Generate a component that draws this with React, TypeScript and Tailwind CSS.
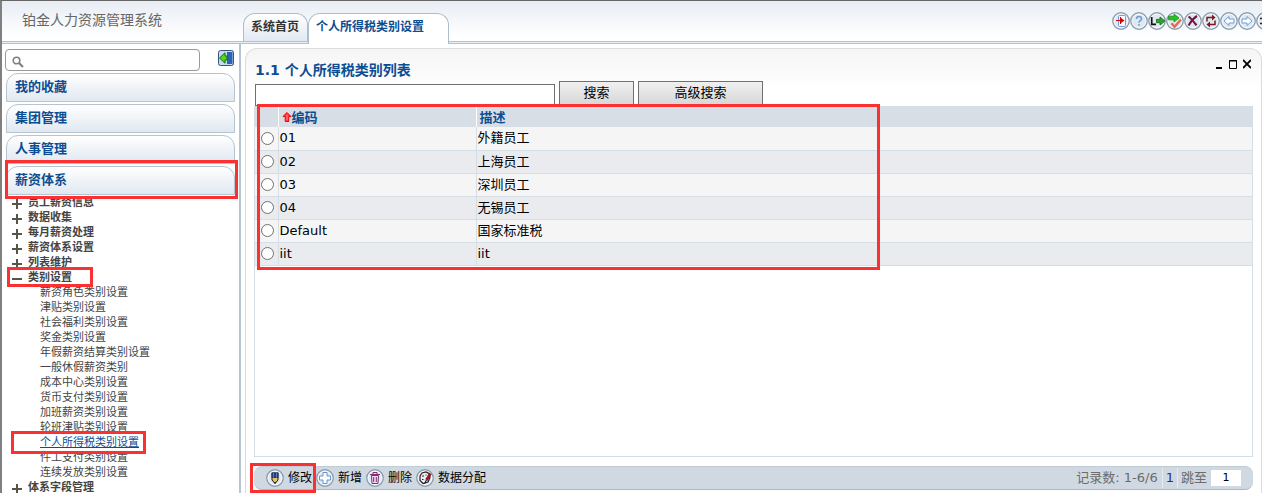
import type { ReactNode } from "react";

function Highlight({ className }: { className: string }) {
  return <span aria-hidden="true" className={`pointer-events-none absolute z-10 border-3 border-[#fb3030] ${className}`} />;
}

function RoundIcon({ children }: { children: ReactNode }) {
  return (
    <svg viewBox="0 0 18 18" className="size-[18px] shrink-0" aria-hidden="true">
      <circle cx="9" cy="9" r="8.2" fill="#dfe8f1" stroke="#8c9dab" strokeWidth="1.4" />
      <circle cx="9" cy="9" r="6.900" fill="none" stroke="#f6faff" strokeWidth="1" />
      {children}
    </svg>
  );
}

const toolbar: { label: string; icon: ReactNode }[] = [
  {
    label: "退出",
    icon: (
      <>
        <rect x="6.5" y="3.5" width="7" height="11" rx="1" fill="#f4f9ff" stroke="#6e9fd8" />
        <path d="M4 8.5h8M8.5 5v7" stroke="#d80000" strokeWidth="1.1" />
        <path d="M9 6l3.500 2.5L9 11z" fill="#d80000" />
      </>
    ),
  },
  {
    label: "帮助",
    icon: <path d="M6.5 7c0-3.300 5-3.300 5 0 0 1.8-2.5 1.6-2.5 3.7M9 12v1.8" fill="none" stroke="#6d9bd0" strokeWidth="1.5" />,
  },
  {
    label: "登录",
    icon: (
      <>
        <path d="M3.7 5v7.3H8" fill="none" stroke="#111" strokeWidth="1.7" />
        <path d="M8.5 7.3H12V5l5 4-5 4v-2.3H8.5z" fill="#2fa52f" stroke="#14671e" strokeWidth=".8" />
      </>
    ),
  },
  {
    label: "确认",
    icon: (
      <>
        <path d="M5.500 11.2l3 3.7L15 7.500" fill="none" stroke="#ef6848" strokeWidth="2.4" />
        <path d="M2.500 4.2h5.500V2l5 4-5 4V7.8H2.500z" fill="#22c51d" stroke="#128213" strokeWidth=".7" />
      </>
    ),
  },
  {
    label: "关闭",
    icon: <path d="M4.5 4.5c3 2 5 5 8 8.8M13 4c-3.500 2-6 5.500-8.500 9.500" fill="none" stroke="#721440" strokeWidth="2.1" />,
  },
  {
    label: "刷新",
    icon: (
      <>
        <path d="M5 9.500v-4h6M13 8.500v4H7" fill="none" stroke="#7d1820" strokeWidth="1.500" />
        <path d="M10 2.500l3.500 3L10 8.500zM8 9.500l-3.500 3 3.500 3z" fill="#7d1820" />
      </>
    ),
  },
  {
    label: "后退",
    icon: <path d="M4 9l5-4.500V7h5v4H9v2.500z" fill="#fff" stroke="#6e9fd8" />,
  },
  {
    label: "前进",
    icon: <path d="M14 9L9 4.500V7H4v4h5v2.500z" fill="#fff" stroke="#6e9fd8" />,
  },
  {
    label: "更多",
    icon: <path d="M4 6.500h9M4 11.500h9" stroke="#222" strokeWidth="1.500" />,
  },
];

const sections = ["我的收藏", "集团管理", "人事管理", "薪资体系"];

const groups: { name: string; items?: string[] }[] = [
  { name: "员工薪资信息" },
  { name: "数据收集" },
  { name: "每月薪资处理" },
  { name: "薪资体系设置" },
  { name: "列表维护" },
  {
    name: "类别设置",
    items: [
      "薪资角色类别设置",
      "津贴类别设置",
      "社会福利类别设置",
      "奖金类别设置",
      "年假薪资结算类别设置",
      "一般休假薪资类别",
      "成本中心类别设置",
      "货币支付类别设置",
      "加班薪资类别设置",
      "轮班津贴类别设置",
      "个人所得税类别设置",
      "件工支付类别设置",
      "连续发放类别设置",
    ],
  },
  { name: "体系字段管理" },
];

const rows = [
  ["01", "外籍员工"],
  ["02", "上海员工"],
  ["03", "深圳员工"],
  ["04", "无锡员工"],
  ["Default", "国家标准税"],
  ["iit", "iit"],
];

const actions: { label: string; icon: ReactNode }[] = [
  {
    label: "修改",
    icon: (
      <>
        <path d="M6 4h6v7l-3 3.500L6 11z" fill="#e9c64d" stroke="#171b33" />
        <path d="M5.500 3.500h7V9h-7z" fill="#233c78" />
        <path d="M7.500 4v4.500M10.500 4v4.500" stroke="#6f8bd0" strokeWidth=".8" />
        <path d="M8 13h2l-1 2z" fill="#111" />
      </>
    ),
  },
  {
    label: "新增",
    icon: <path d="M7 3.500h4V7h3.500v4H11v3.500H7V11H3.500V7H7z" fill="#fff" stroke="#6098d4" />,
  },
  {
    label: "删除",
    icon: (
      <>
        <path d="M5.500 6.500h7l-.5 8H6z" fill="#f3dcf1" stroke="#7d2e75" />
        <path d="M4 5.500h10M7 5V3.500h4V5M7.700 8v5M10.300 8v5" fill="none" stroke="#7d2e75" />
      </>
    ),
  },
  {
    label: "数据分配",
    icon: (
      <>
        <path d="M4 7l2-3 4-1 3 1.500 1 4-2 4.500-5 1.500-3-3z" fill="#eee" stroke="#222" strokeWidth="1.200" />
        <path d="M6 7h2M9.500 6h1M6 10.500h1.500" stroke="#222" />
        <path d="M14.500 4.500L10.500 11" stroke="#9b1520" strokeWidth="2.800" />
        <path d="M10.500 11l-2 3.500" stroke="#222" strokeWidth="1.200" />
      </>
    ),
  },
];

function Header() {
  return (
    <header className="flex h-[43px] shrink-0 border-b-3 border-double border-[#b3c2ce] bg-linear-to-b from-[#e8edf5] to-white to-90%">
      <h1 className="w-[241px] shrink-0 pt-[9px] pl-5 text-[14px] leading-5 text-[#666]">铂金人力资源管理系统</h1>
      <nav className="flex grow pt-3 text-[12px] font-bold">
        <a href="#home" className="w-[65px] rounded-t-xl border border-b-0 border-[#aebdca] bg-linear-to-b from-white to-[#e2e9f2] px-[7px] pt-1 leading-[18px] text-[#333]">
          系统首页
        </a>
        <a href="#tax" aria-current="page" className="-mb-[3px] w-[141px] rounded-t-xl border border-b-0 border-[#aebdca] bg-white px-[7px] pt-1 leading-[18px] text-[#0c4d92]">
          个人所得税类别设置
        </a>
      </nav>
      <div className="flex w-[150px] shrink-0 items-center overflow-hidden">
        {toolbar.map((t) => (
          <button key={t.label} type="button" aria-label={t.label} className="shrink-0">
            <RoundIcon>{t.icon}</RoundIcon>
          </button>
        ))}
      </div>
    </header>
  );
}

function Sidebar() {
  return (
    <aside className="w-[239px] shrink-0 overflow-hidden border-r-2 border-[#b6c5d1] bg-white pt-[5px]">
      <div className="flex items-start justify-between pr-[5px] pl-[3px]">
        <label className="flex h-[22px] w-[195px] items-center rounded border border-[#999] px-1.5">
          <svg viewBox="0 0 12 12" className="mt-[3px] size-3 shrink-0" aria-hidden="true">
            <circle cx="4.500" cy="4.500" r="3.300" fill="none" stroke="#808080" strokeWidth="1.600" />
            <path d="M7 7l4 4" stroke="#808080" strokeWidth="2.200" />
          </svg>
          <input type="text" aria-label="菜单搜索" className="min-w-0 grow px-1 text-[12px] outline-none" />
        </label>
        <button type="button" aria-label="收起菜单" className="mt-px">
          <svg viewBox="0 0 16 16" className="size-4" aria-hidden="true">
            <rect x=".5" y=".5" width="15" height="15" rx="2" fill="#c5daf0" stroke="#34557c" />
            <path d="M9 2h5.500v12H9z" fill="#2d62b5" />
            <path d="M1.500 8L7 2.800V6h2v4H7v3.200z" fill="#55d51c" stroke="#176e12" />
          </svg>
        </button>
      </div>
      <div className="mt-0.5 flex flex-col gap-0.5 pr-1 pl-1">
        {sections.map((s) => (
          <div key={s} className="relative">
            <button
              type="button"
              className="block h-[29px] w-full rounded-t-xl border border-[#b5c4d0] bg-linear-to-b from-white to-[#e0e8f0] px-2 pb-0.5 text-left text-[13px] leading-6 font-bold text-[#0c4d92]"
            >
              {s}
            </button>
            {s === "薪资体系" && <Highlight className="-top-1.5 -right-[3px] -bottom-1 -left-px" />}
          </div>
        ))}
      </div>
      <ul className="text-[11px] leading-[15px] text-[#444]">
        {groups.map((g) => (
          <li key={g.name}>
            <div className="relative flex items-center pl-2.5 font-bold">
              <button type="button" className="flex items-center gap-1.5">
                <svg viewBox="0 0 10 10" className="mt-0.5 size-2.5" aria-hidden="true">
                  <path d={g.items ? "M0 5h10" : "M0 5h10M5 0v10"} stroke="#55554a" strokeWidth="2" />
                </svg>
                {g.name}
              </button>
              {g.items && <Highlight className="-top-[3px] -bottom-[2px] left-[5px] w-[86px]" />}
            </div>
            {g.items && (
              <ul>
                {g.items.map((item) => {
                  const current = item === "个人所得税类别设置";
                  return (
                    <li key={item} className="relative pl-[38px]">
                      <a href="#item" className={current ? "text-[#0c4d92] underline" : ""}>
                        {item}
                      </a>
                      {current && <Highlight className="-top-1 -bottom-1 left-[9px] w-[135px]" />}
                    </li>
                  );
                })}
              </ul>
            )}
          </li>
        ))}
      </ul>
    </aside>
  );
}

function Panel() {
  return (
    <main className="ml-1 flex min-w-0 grow flex-col pt-1">
      <section className="flex grow flex-col rounded-t-xl border border-b-0 border-[#dcdcdc] bg-linear-to-b from-[#f5f5f5] to-white to-[40px] pr-2 pb-[3px] pl-2">
        <div className="flex h-8 items-start justify-between pt-2.5 pl-px">
          <h2 className="text-[14px] leading-[22px] font-bold text-[#0c4d92]">1.1 个人所得税类别列表</h2>
          <div className="flex gap-1.5 pr-0.5">
            <button type="button" aria-label="最小化">
              <svg viewBox="0 0 8 10" className="h-2.5 w-2" aria-hidden="true">
                <path d="M1 9h6" stroke="#000" strokeWidth="2" />
              </svg>
            </button>
            <button type="button" aria-label="最大化">
              <svg viewBox="0 0 8 10" className="h-2.5 w-2" aria-hidden="true">
                <path d="M.5 1.500h7v8h-7zM0 2h8" fill="none" stroke="#000" />
              </svg>
            </button>
            <button type="button" aria-label="关闭">
              <svg viewBox="0 0 8 10" className="h-2.5 w-2" aria-hidden="true">
                <path d="M0 1l8 8M8 1L0 9" stroke="#000" strokeWidth="1.800" />
              </svg>
            </button>
          </div>
        </div>
        <form className="flex items-end gap-1 pl-px text-[13px]" onSubmit={(e) => e.preventDefault()}>
          <input type="text" aria-label="搜索内容" className="-mb-px h-[22px] w-[300px] border border-[#707070] bg-white px-1 outline-none" />
          <button type="submit" className="h-6 w-[75px] border border-[#707070] bg-linear-to-b from-[#f0f0f0] to-[#d8d8d8] leading-5">
            搜索
          </button>
          <button type="button" className="h-6 w-[125px] border border-[#707070] bg-linear-to-b from-[#f0f0f0] to-[#d8d8d8] leading-5">
            高级搜索
          </button>
        </form>
        <div className="relative mt-px grow border border-[#d6dee5] bg-white">
          <table className="w-full table-fixed border-collapse text-[13px]">
            <colgroup>
              <col className="w-[23px]" />
              <col className="w-[198px]" />
              <col />
            </colgroup>
            <thead>
              <tr className="h-5 bg-[#d7dee5] text-left leading-[19px] text-[#0c4d92]">
                <th aria-label="选择" className="p-0" />
                <th className="border-l border-white p-0 pl-[3px]">
                  <span className="flex items-center">
                    <svg viewBox="0 0 10 11" className="size-2.5" aria-hidden="true">
                      <path d="M5 .5L9.500 5H7v5.500H3V5H.5z" fill="#f33" stroke="#f00000" />
                      <path d="M5 3v6" stroke="#fff" strokeWidth=".5" />
                    </svg>
                    编码
                  </span>
                </th>
                <th className="border-l border-white p-0 pl-[3px]">描述</th>
              </tr>
            </thead>
            <tbody>
              {rows.map(([code, text]) => (
                <tr key={code} className="h-[23px] border-b border-[#d6dee5] leading-5 odd:bg-[#f5f5f5] even:bg-[#eaebef]">
                  <td className="p-0 pl-1.5">
                    <input
                      type="radio"
                      name="category"
                      aria-label={code}
                      className="block size-[13px] appearance-none rounded-full border border-[#707070] bg-white checked:border-4"
                    />
                  </td>
                  <td className="border-l border-[#d6dee5] p-0 pl-px">{code}</td>
                  <td className="border-l border-[#d6dee5] p-0 pl-px">{text}</td>
                </tr>
              ))}
            </tbody>
          </table>
          <Highlight className="-top-[3px] left-0.5 h-[166px] w-[623px]" />
        </div>
        <footer className="relative mt-[9px] flex h-6 items-center justify-between rounded-lg border-y border-t-[#c0ccd6] border-b-[#a9b8c6] bg-[#d0d9e2] pr-3 pl-3">
          <div className="flex items-center gap-1 text-[12px]">
            {actions.map((a) => (
              <button key={a.label} type="button" className="flex items-center gap-1 leading-5">
                <RoundIcon>{a.icon}</RoundIcon>
                {a.label}
              </button>
            ))}
          </div>
          <div className="flex items-center text-[13px] text-[#6b6b6b]">
            <span className="pr-1">记录数: 1-6/6</span>
            <a href="#page" className="border-x border-[#e5ebf0] px-[3px] leading-5 text-[#2f2b94]">
              1
            </a>
            <label className="flex items-center gap-1 pl-[3px]">
              跳至
              <input type="text" defaultValue="1" className="h-4 w-[30px] bg-white text-center text-[11px] text-black outline-none" />
            </label>
          </div>
          <Highlight className="-top-1 -left-1 h-[30px] w-[66px]" />
        </footer>
      </section>
    </main>
  );
}

export default function App() {
  return (
    <div className="flex h-screen flex-col overflow-hidden border-t border-l-2 border-t-[#666] border-l-[#808080] bg-white font-['DejaVu_Sans','Noto_Sans_CJK_SC',sans-serif] text-black">
      <Header />
      <div className="flex min-h-0 grow">
        <Sidebar />
        <Panel />
      </div>
    </div>
  );
}
